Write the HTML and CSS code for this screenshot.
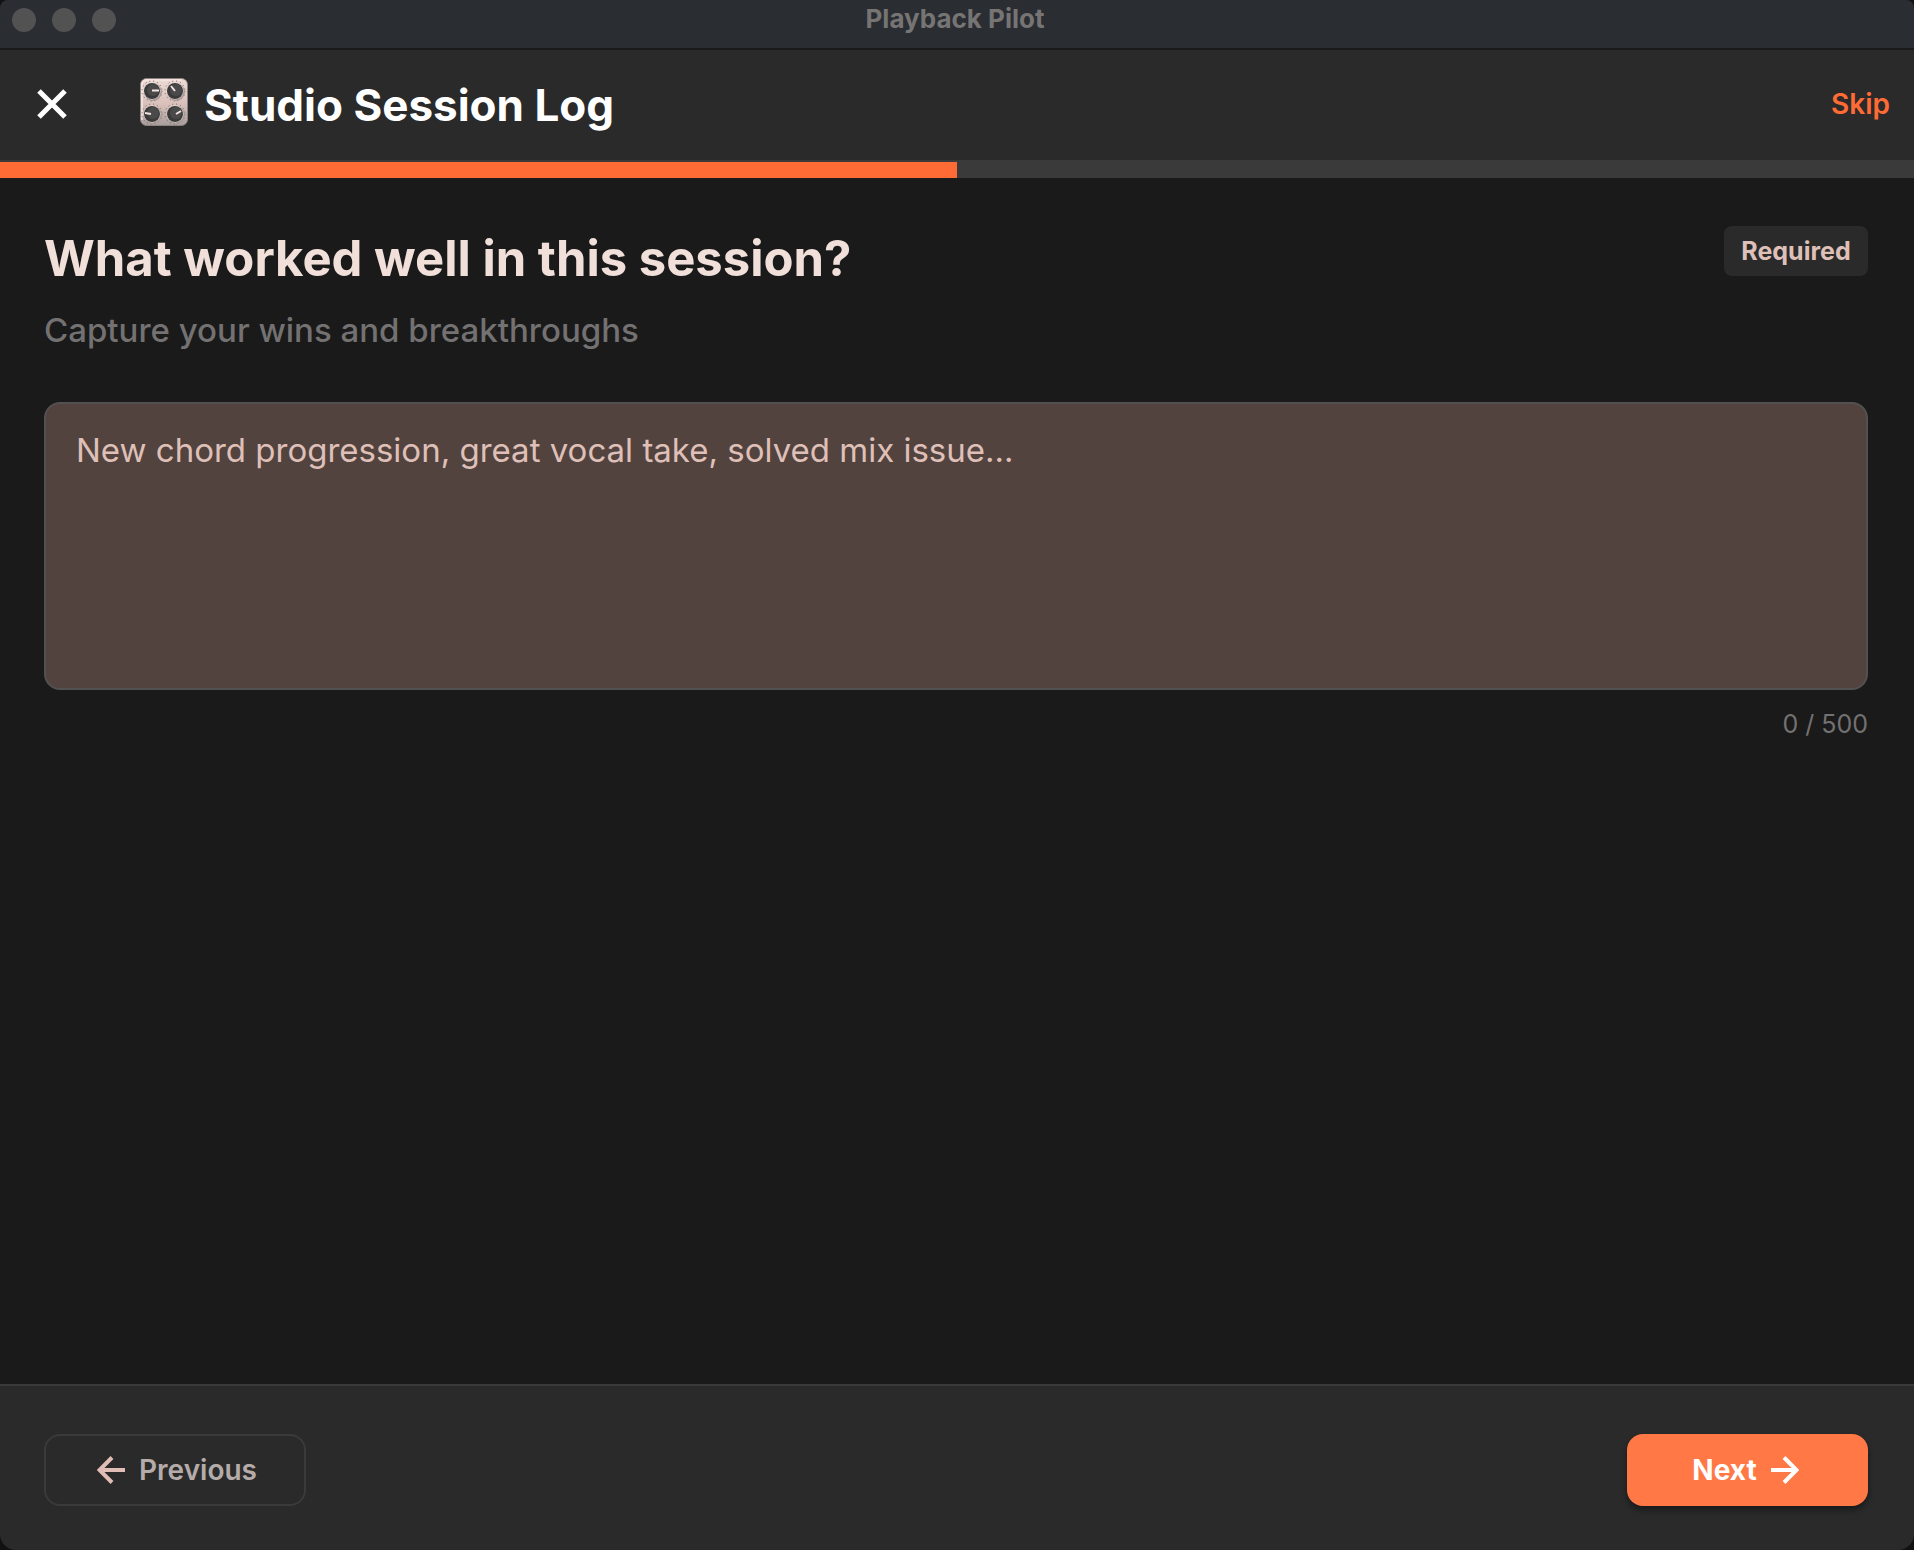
FILE: index.html
```html
<!DOCTYPE html>
<html lang="en">
<head>
  <meta charset="utf-8">
  <meta name="viewport" content="width=device-width, initial-scale=1">
  <title>Playback Pilot</title>
  <link rel="stylesheet" href="styles.css">
</head>
<body>
  <div class="window">
    <div class="titlebar">
      <div class="lights"><span class="light"></span><span class="light"></span><span class="light"></span></div>
      <span class="app-name">Playback Pilot</span>
    </div>

    <header class="header">
      <button class="close" type="button" aria-label="Close">
        <svg width="32" height="32" viewBox="0 0 32 32"><path d="M3 3L29 29M29 3L3 29" fill="none" stroke="currentColor" stroke-width="5"/></svg>
      </button>
      <svg class="knobs" width="48" height="48" viewBox="0 0 48 48" aria-hidden="true">
        <defs>
          <linearGradient id="plate" x1="0" y1="0" x2="0" y2="1">
            <stop offset="0" stop-color="#eedad5"/><stop offset=".55" stop-color="#d9c0ba"/><stop offset="1" stop-color="#a69e9c"/>
          </linearGradient>
          <g id="knob">
            <circle r="10" fill="none" stroke="#6b605e" stroke-width="1" stroke-dasharray="1 3"/>
            <circle cx="1" cy="1" r="9" fill="#a89a97"/>
            <circle r="8.5" fill="#eadeda"/>
            <circle r="8" fill="#3a3a3a"/>
            <circle cx="1" cy="-1" r="6" fill="#4a4a4a"/>
          </g>
        </defs>
        <rect x=".5" y=".5" width="47" height="47" rx="6" fill="url(#plate)" stroke="#8b8280"/>
        <path d="M2 42V7Q2 2 7 2H41" fill="none" stroke="#f5e8e4" stroke-width="1.5"/>
        <use href="#knob" x="12" y="13"/><use href="#knob" x="35" y="13"/>
        <use href="#knob" x="12" y="36"/><use href="#knob" x="35" y="36"/>
        <path d="M12 12.500H19M31 8L35 13M5 35L11 36M36 36L41 33" stroke="#f3e4df" stroke-width="2" fill="none"/>
      </svg>
      <h1 class="title">Studio Session Log</h1>
      <button class="skip" type="button">Skip</button>
    </header>

    <progress class="progress" value="50" max="100" aria-label="Session log progress"></progress>

    <main class="main">
      <div class="question-row">
        <h2 class="question"><label for="answer">What worked well in this session?</label></h2>
        <span class="badge">Required</span>
      </div>
      <p class="hint">Capture your wins and breakthroughs</p>
      <textarea class="answer" id="answer" maxlength="500" placeholder="New chord progression, great vocal take, solved mix issue..."></textarea>
      <p class="counter">0 / 500</p>
    </main>

    <footer class="footer">
      <button class="btn previous" type="button">
        <svg width="28" height="28" viewBox="0 0 28 28" aria-hidden="true"><path d="M28 14H3M15 1.500L2.500 14L15 26.500" fill="none" stroke="#e0beb6" stroke-width="4"/></svg>
        Previous
      </button>
      <button class="btn next" type="button">
        Next
        <svg width="28" height="28" viewBox="0 0 28 28" aria-hidden="true"><path d="M0 14H25M13 1.500L25.500 14L13 26.500" fill="none" stroke="currentColor" stroke-width="4"/></svg>
      </button>
    </footer>
  </div>
</body>
</html>
```

FILE: styles.css
```css
* {
  box-sizing: border-box;
}

body {
  margin: 0;
  background: #111;
  color: #fff;
  font-family: Inter, "Liberation Sans", sans-serif;
}

h1, h2, p {
  margin: 0;
}

button {
  padding: 0;
  border: 0;
  background: none;
  color: inherit;
  font: inherit;
}

svg {
  display: block;
  flex: none;
}

.window {
  display: flex;
  flex-direction: column;
  min-height: 100vh;
  overflow: hidden;
  border-radius: 8px 8px 16px 16px;
  background: #1a1a1a;
}

.titlebar {
  display: grid;
  grid-template-columns: 1fr auto 1fr;
  align-items: center;
  height: 50px;
  padding: 0 16px 8px 12px;
  border-bottom: 2px solid #1a1a1a;
  background: #2a2d32;
}

.lights {
  display: flex;
  gap: 16px;
}

.light {
  width: 24px;
  height: 24px;
  border-radius: 50%;
  background: #525252;
}

.app-name {
  padding-bottom: 2px;
  color: #777474;
  font-size: 26px;
  font-weight: 700;
  line-height: 32px;
}

.header {
  display: flex;
  align-items: center;
  height: 112px;
  padding: 0 24px 2px 36px;
  border-bottom: 2px solid #3a3a3a;
  background: #2a2a2a;
}

.close {
  margin-right: 72px;
}

.knobs {
  margin: 0 16px 4px 0;
}

.title {
  flex: 1;
  padding-top: 2px;
  font-size: 44px;
  font-weight: 700;
  line-height: 56px;
}

.skip {
  color: #ff6b35;
  font-size: 28px;
  font-weight: 600;
}

.progress {
  display: block;
  width: 100%;
  height: 16px;
  border: 0;
  appearance: none;
  background: #3a3a3a;
}

.progress::-webkit-progress-bar {
  background: #3a3a3a;
}

.progress::-webkit-progress-value {
  background: #ff6b35;
}

.main {
  flex: 1;
  padding: 48px 46px 48px 44px;
}

.question-row {
  display: flex;
  align-items: flex-start;
  justify-content: space-between;
}

.question {
  color: #f1dfda;
  font-size: 49px;
  font-weight: 700;
  line-height: 66px;
}

.badge {
  min-width: 144px;
  padding: 9px 16px;
  border-radius: 8px;
  background: #2a2a2a;
  color: #dfc0b8;
  font-size: 25px;
  font-weight: 700;
  line-height: 32px;
  text-align: center;
}

.hint {
  margin-top: 14px;
  color: #737171;
  font-size: 33px;
  font-weight: 500;
  line-height: 48px;
}

.answer {
  display: block;
  width: 100%;
  height: 288px;
  margin-top: 48px;
  padding: 22px 30px;
  border: 2px solid #525050;
  border-radius: 16px;
  outline: 0;
  resize: none;
  background: #53433f;
  color: #f1dfda;
  font: 400 33px/48px Inter, "Liberation Sans", sans-serif;
}

.answer::placeholder {
  color: #dfc0b8;
  opacity: 1;
}

.counter {
  margin-top: 16px;
  color: #737171;
  font-size: 25px;
  line-height: 36px;
  text-align: right;
}

.footer {
  display: flex;
  justify-content: space-between;
  padding: 48px 46px 44px 44px;
  border-top: 2px solid #3a3a3a;
  background: #2a2a2a;
}

.btn {
  display: flex;
  align-items: center;
  justify-content: center;
  gap: 14px;
  height: 72px;
  padding: 0 46px 0 50px;
  border-radius: 16px;
  font-size: 28px;
}

.previous {
  min-width: 262px;
  border: 2px solid #3a3a3a;
  color: #b5acaa;
  font-weight: 600;
}

.next {
  min-width: 241px;
  padding: 0 50px 0 46px;
  background: #ff7845;
  box-shadow: 0 4px 6px rgba(0, 0, 0, 0.4);
  font-weight: 700;
}
```
